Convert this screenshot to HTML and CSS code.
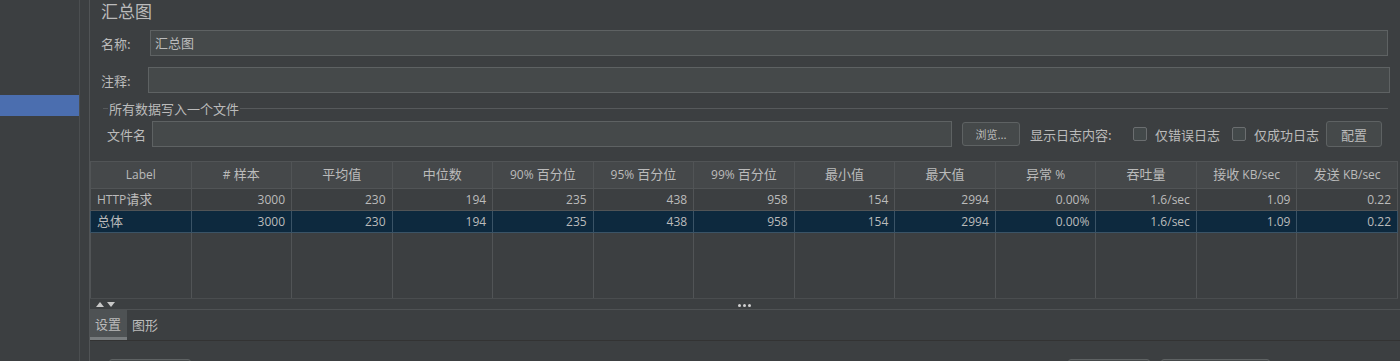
FILE: index.html
```html
<!DOCTYPE html>
<html lang="zh-CN">
<head>
    <meta charset="UTF-8">
    <meta name="viewport" content="width=device-width, initial-scale=1.0">
    <title>汇总图</title>
    <link rel="stylesheet" href="styles.css">
</head>
<body>
    <div class="sidebar">
        <div class="tree-item selected"></div>
    </div>
    <div class="sidebar-gap"></div>
    <div class="main">
        <div class="title">汇总图</div>

        <div class="form-row name-row">
            <label class="row-label">名称:</label>
            <div class="text-input">汇总图</div>
        </div>
        <div class="form-row comment-row">
            <label class="row-label">注释:</label>
            <div class="text-input"></div>
        </div>

        <div class="group-title">
            <span class="group-line short"></span>
            <span class="group-text">所有数据写入一个文件</span>
            <span class="group-line"></span>
        </div>

        <div class="form-row file-row">
            <label class="row-label">文件名</label>
            <div class="text-input file-input"></div>
            <button class="btn browse-btn">浏览...</button>
            <span class="log-label">显示日志内容:</span>
            <span class="checkbox"></span>
            <span class="check-label first">仅错误日志</span>
            <span class="checkbox"></span>
            <span class="check-label">仅成功日志</span>
            <button class="btn config-btn">配置</button>
        </div>

        <table class="results">
            <thead>
                <tr>
                    <th>Label</th>
                    <th># <span class="zh">样本</span></th>
                    <th><span class="zh">平均值</span></th>
                    <th><span class="zh">中位数</span></th>
                    <th>90% <span class="zh">百分位</span></th>
                    <th>95% <span class="zh">百分位</span></th>
                    <th>99% <span class="zh">百分位</span></th>
                    <th><span class="zh">最小值</span></th>
                    <th><span class="zh">最大值</span></th>
                    <th><span class="zh">异常</span> %</th>
                    <th><span class="zh">吞吐量</span></th>
                    <th><span class="zh">接收</span> KB/sec</th>
                    <th><span class="zh">发送</span> KB/sec</th>
                </tr>
            </thead>
            <tbody>
                <tr>
                    <td class="label-cell">HTTP<span class="zh">请求</span></td>
                    <td>3000</td><td>230</td><td>194</td><td>235</td><td>438</td><td>958</td>
                    <td>154</td><td>2994</td><td>0.00%</td><td>1.6/sec</td><td>1.09</td><td>0.22</td>
                </tr>
                <tr class="selected-row">
                    <td class="label-cell"><span class="zh">总体</span></td>
                    <td>3000</td><td>230</td><td>194</td><td>235</td><td>438</td><td>958</td>
                    <td>154</td><td>2994</td><td>0.00%</td><td>1.6/sec</td><td>1.09</td><td>0.22</td>
                </tr>
                <tr class="filler">
                    <td></td><td></td><td></td><td></td><td></td><td></td><td></td>
                    <td></td><td></td><td></td><td></td><td></td><td></td>
                </tr>
            </tbody>
        </table>

        <div class="splitter">
            <div class="arrows">
                <span class="arrow up"></span>
                <span class="arrow down"></span>
            </div>
            <div class="dots"><span></span><span></span><span></span></div>
        </div>

        <div class="tabs">
            <div class="tab active">设置</div>
            <div class="tab">图形</div>
        </div>

        <div class="bottom-panel">
            <button class="btn bottom-btn first"></button>
            <div class="spacer"></div>
            <button class="btn bottom-btn"></button>
            <button class="btn bottom-btn wide"></button>
        </div>
    </div>
</body>
</html>
```

FILE: styles.css
```css
body {
    margin: 0;
    height: 361px;
    overflow: hidden;
    display: flex;
    background-color: #3c3f41;
    color: #bbbbbb;
    font-family: "Noto Sans CJK SC", "Noto Sans", sans-serif;
    font-size: 13px;
}
.sidebar {
    width: 79px;
    flex: none;
    border-right: 1px solid #4b4e50;
}
.tree-item {
    height: 21px;
}
.tree-item.selected {
    margin-top: 95px;
    background-color: #4b6eaf;
}
.sidebar-gap {
    width: 9px;
    flex: none;
    border-right: 1px solid #515456;
}
.main {
    flex: 1;
    min-width: 0;
    height: 361px;
    overflow: hidden;
    display: flex;
    flex-direction: column;
}
.title {
    flex: none;
    height: 22px;
    line-height: 22px;
    padding-left: 11px;
    font-size: 17px;
}
.form-row {
    flex: none;
    display: flex;
    align-items: center;
    height: 26px;
}
.name-row {
    margin-top: 8px;
}
.comment-row {
    margin-top: 11px;
}
.row-label {
    flex: none;
    box-sizing: border-box;
    padding-left: 11px;
}
.name-row .row-label {
    width: 60px;
}
.comment-row .row-label {
    width: 58px;
}
.text-input {
    flex: 1;
    height: 26px;
    box-sizing: border-box;
    background-color: #45494a;
    border: 1px solid #5e6263;
    padding: 0 4px;
    line-height: 24px;
}
.name-row .text-input {
    margin-right: 12px;
}
.comment-row .text-input {
    margin-right: 10px;
}
.group-title {
    flex: none;
    display: flex;
    align-items: center;
    height: 14px;
    margin-top: 8px;
    padding-left: 13px;
    margin-right: 12px;
}
.group-line {
    flex: 1;
    height: 1px;
    background-color: #56595b;
}
.group-line.short {
    flex: none;
    width: 5px;
}
.group-text {
    padding: 0 1px;
}
.file-row {
    margin-top: 6px;
}
.file-row .row-label {
    width: 62px;
    padding-left: 17px;
}
.file-input {
    flex: none;
    width: 800px;
}
.btn {
    box-sizing: border-box;
    background-color: #45494a;
    border: 1px solid #5e6263;
    border-radius: 3px;
    color: #bbbbbb;
    font-family: inherit;
    padding: 0;
}
.browse-btn {
    width: 58px;
    height: 24px;
    margin-left: 10px;
    font-size: 11px;
}
.log-label {
    margin-left: 10px;
    width: 103px;
}
.checkbox {
    flex: none;
    width: 14px;
    height: 14px;
    box-sizing: border-box;
    border: 1px solid #6b6e70;
    border-radius: 2px;
    background-color: #43494a;
}
.check-label {
    margin-left: 8px;
    width: 72px;
}
.check-label.first {
    width: 77px;
}
.config-btn {
    width: 56px;
    height: 26px;
    font-size: 13px;
}
.results {
    flex: none;
    margin-top: 14px;
    width: 1308px;
    table-layout: fixed;
    border-collapse: collapse;
    font-family: "Open Sans", "Noto Sans CJK SC", sans-serif;
    font-size: 12px;
    line-height: 16px;
}
.results .zh {
    font-family: "Noto Sans CJK SC", sans-serif;
    font-size: 13px;
    line-height: 1;
}
.results th,
.results td {
    border: 1px solid #515456;
    padding: 0 6px;
    white-space: nowrap;
    overflow: hidden;
}
.results th {
    height: 26px;
    background-color: #45484a;
    font-weight: normal;
    text-align: center;
}
.results td {
    height: 21px;
    text-align: right;
}
.results td.label-cell {
    text-align: left;
    padding-left: 6px;
}
.results tr.selected-row td {
    background-color: #0d293e;
    border-color: #3a5366;
}
.results tr.filler td {
    height: 65px;
    border-bottom-color: #4a4d4f;
}
.splitter {
    flex: none;
    height: 10px;
    border-bottom: 1px solid #4f5254;
    display: flex;
    align-items: center;
    position: relative;
}
.arrows {
    display: flex;
    gap: 3px;
    padding-left: 6px;
}
.arrow {
    width: 0;
    height: 0;
    border-left: 4px solid transparent;
    border-right: 4px solid transparent;
}
.arrow.up {
    border-bottom: 5px solid #c8c8c8;
}
.arrow.down {
    border-top: 5px solid #c8c8c8;
}
.dots {
    position: absolute;
    left: 648px;
    top: 5px;
    display: flex;
    gap: 2px;
}
.dots span {
    width: 3px;
    height: 3px;
    border-radius: 50%;
    background-color: #d0d0d0;
}
.tabs {
    display: flex;
    flex: none;
    height: 30px;
    border-bottom: 1px solid #333333;
}
.tab {
    padding: 0 6px 0 5px;
    line-height: 30px;
    font-size: 13px;
}
.tab.active {
    background-color: #4e5254;
    border-bottom: 3px solid #787c7e;
    line-height: 27px;
    height: 27px;
}
.bottom-panel {
    display: flex;
    flex: 1;
    min-height: 0;
    padding-top: 18px;
    padding-left: 19px;
    padding-right: 130px;
}
.bottom-btn {
    flex: none;
    width: 82px;
    height: 26px;
}
.bottom-btn.wide {
    width: 109px;
    margin-left: 11px;
}
.spacer {
    flex: 1;
}
```
